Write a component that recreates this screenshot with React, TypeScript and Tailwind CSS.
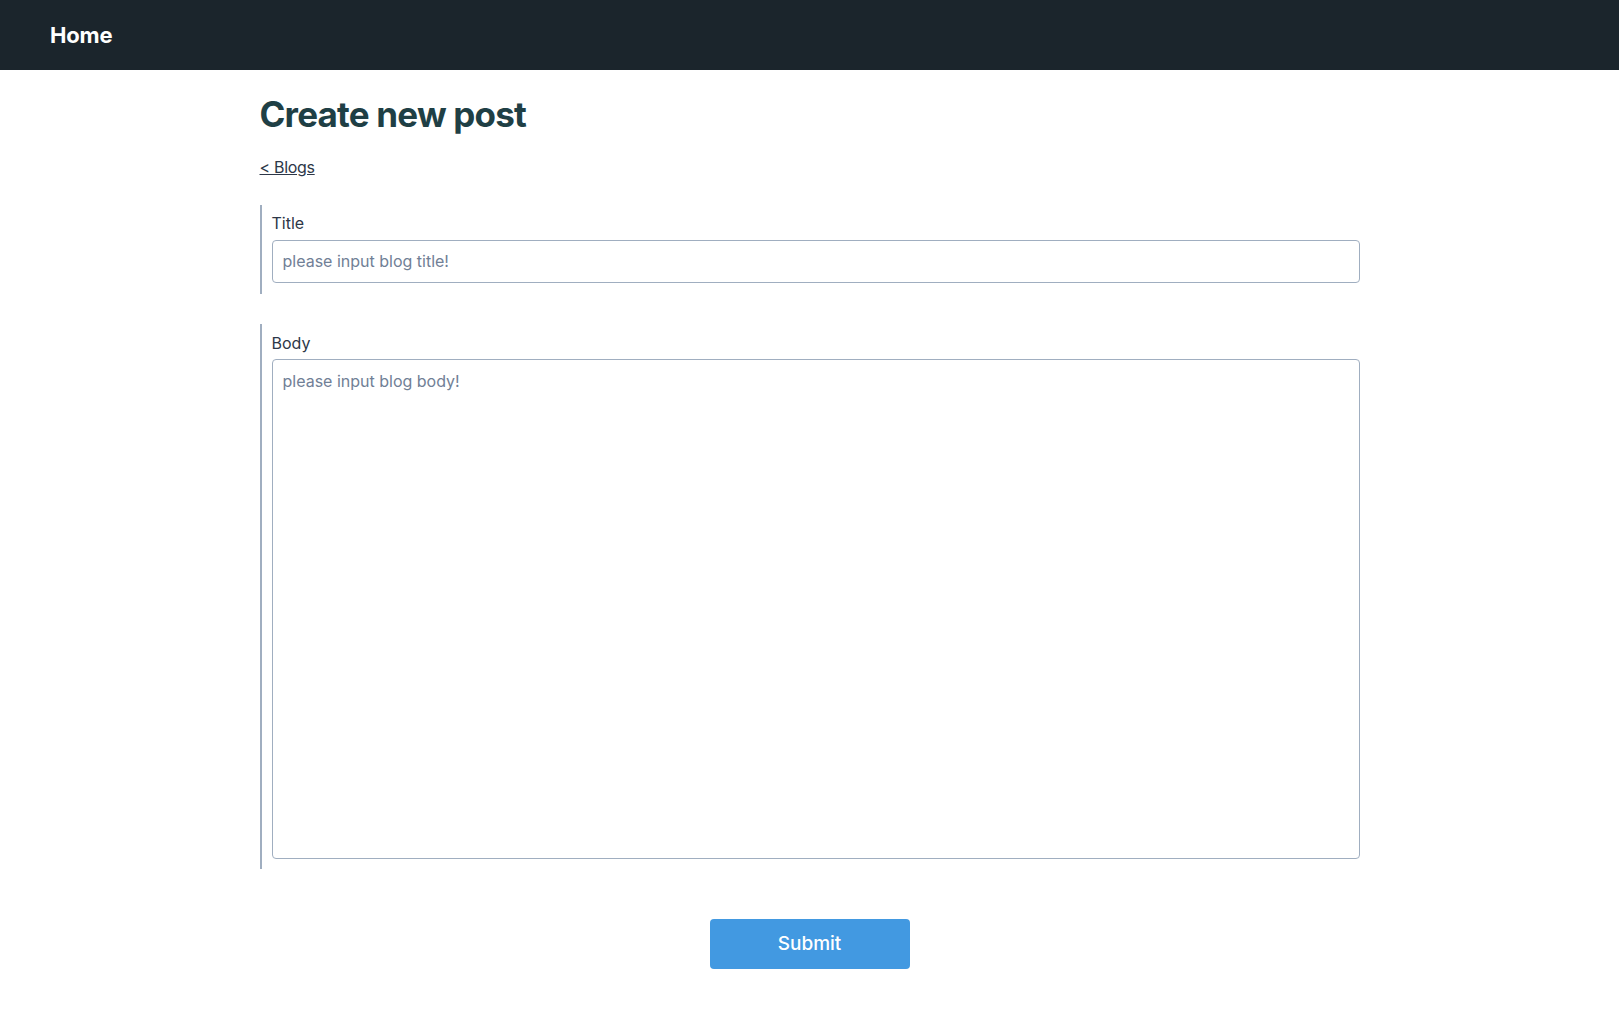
export default function App() {
  return (
    <div className="min-h-screen bg-white font-['Inter','Noto_Sans_CJK_JP',sans-serif] text-[#2d3748]">
      <header className="flex h-[70px] items-center bg-[#1b252c] px-[50px]">
        <a className="text-[22px] font-bold tracking-[-0.2px] text-white">Home</a>
      </header>

      <main className="mx-auto w-[1100px]">
        <h1 className="mt-[22px] text-[35px] font-bold leading-[45px] tracking-[-0.8px] text-[#1f3f45]">Create new post</h1>

        <a href="#" className="mt-[18px] inline-block text-[16px] leading-6 tracking-[-0.3px] text-[#2d3748] underline">
          &lt; Blogs
        </a>

        <form className="mt-[26px]">
          <div className="border-l-2 border-[#a0aec0] pb-[11px] pl-[10px] pt-[6px]">
            <label className="block text-[16px] leading-6 text-[#2d3748]">Title</label>
            <input
              className="mt-[5px] block h-[43px] w-full rounded border border-[#a0aec0] px-[10px] pb-[2px] text-[16px] outline-none placeholder:text-[#718096]"
              placeholder="please input blog title!"
            />
          </div>

          <div className="mt-[30px] border-l-2 border-[#a0aec0] pb-[10px] pl-[10px] pt-[7px]">
            <label className="block text-[16px] leading-6 text-[#2d3748]">Body</label>
            <textarea
              className="mt-1 block h-[500px] w-full resize-none rounded border border-[#a0aec0] px-[10px] py-[9px] text-[16px] outline-none placeholder:text-[#718096]"
              placeholder="please input blog body!"
            />
          </div>

          <div className="mt-[50px] flex justify-center">
            <button
              type="button"
              className="h-[50px] w-[200px] rounded bg-[#4299e1] text-[19px] font-medium text-white"
            >
              Submit
            </button>
          </div>
        </form>
      </main>
    </div>
  );
}
